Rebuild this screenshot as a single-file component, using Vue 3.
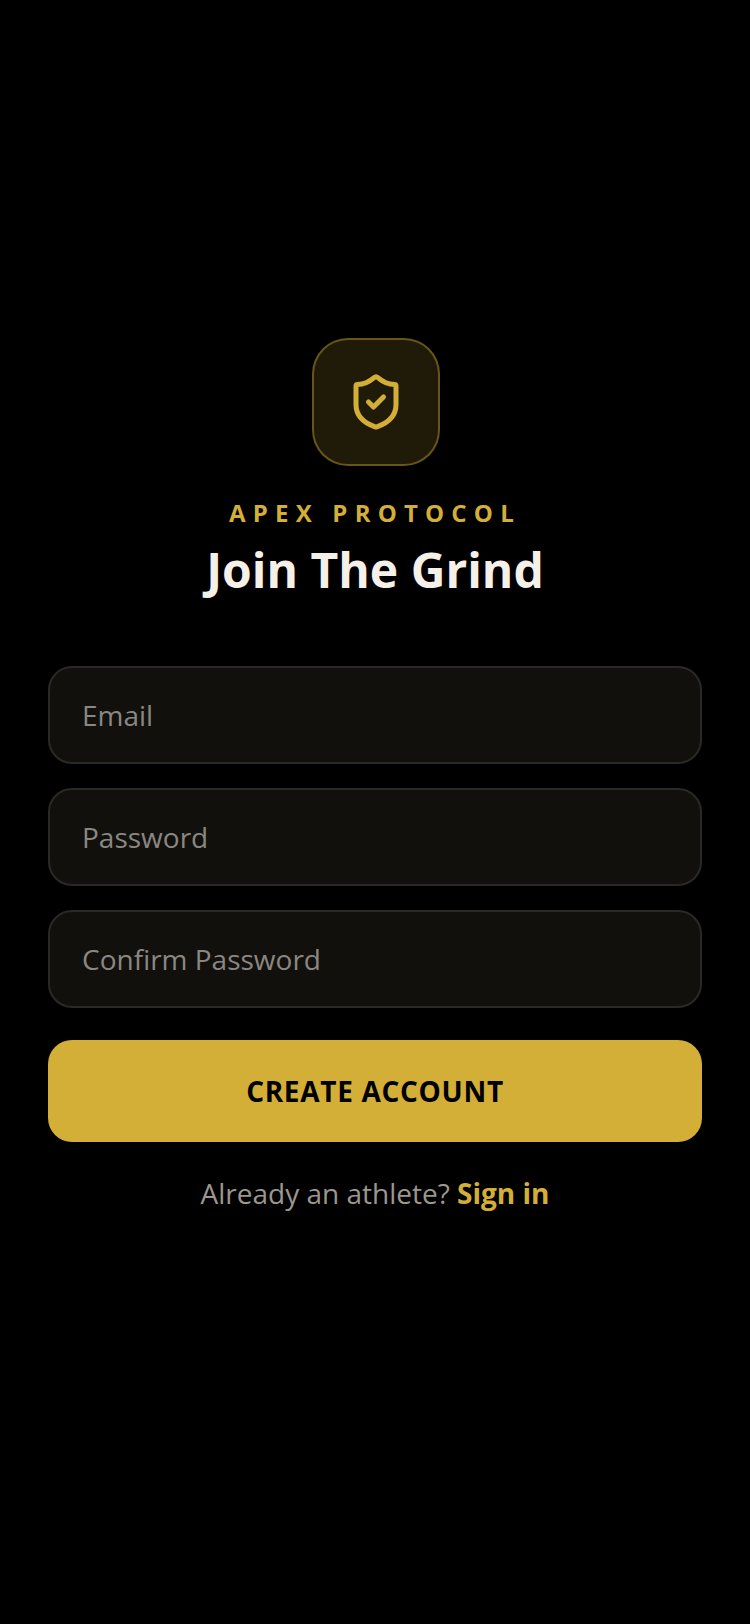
<template>
  <main class="page">
    <div class="logo">
      <svg width="60" height="60" viewBox="0 0 24 24" fill="none" stroke="#d4af37" stroke-width="2" stroke-linecap="round" stroke-linejoin="round">
        <path d="M20 13c0 5-3.5 7.5-7.66 8.95a1 1 0 0 1-.67-.01C7.5 20.5 4 18 4 13V5.6a.6.6 0 0 1 .6-.6c2.2 0 4.9-1.2 6.64-2.72a1.17 1.17 0 0 1 1.52 0C14.51 3.81 17.2 5 19.4 5a.6.6 0 0 1 .6.6z" />
        <path d="m9 12 2 2 4-4" />
      </svg>
    </div>
    <div class="brand">APEX PROTOCOL</div>
    <h1 class="title">Join The Grind</h1>

    <form class="form" @submit.prevent>
      <input class="field" type="email" placeholder="Email" />
      <input class="field" type="password" placeholder="Password" />
      <input class="field" type="password" placeholder="Confirm Password" />
      <button class="submit" type="submit">CREATE ACCOUNT</button>
    </form>

    <p class="switch">Already an athlete? <a class="link">Sign in</a></p>
  </main>
</template>

<script setup>
</script>

<style>
html,
body {
  margin: 0;
  background: #000;
}
</style>

<style scoped>
.page {
  box-sizing: border-box;
  width: 750px;
  height: 1624px;
  padding: 338px 48px 0;
  display: flex;
  flex-direction: column;
  align-items: center;
  background: #000;
  font-family: "Open Sans", sans-serif;
}

.logo {
  box-sizing: border-box;
  width: 128px;
  height: 128px;
  margin-left: 2px;
  display: flex;
  align-items: center;
  justify-content: center;
  border: 2px solid rgba(212, 175, 55, 0.4);
  border-radius: 36px;
  background: rgba(212, 175, 55, 0.15);
}

.brand {
  margin-top: 30px;
  font-size: 24px;
  line-height: 34px;
  font-weight: 700;
  letter-spacing: 7.2px;
  color: #d4af37;
}

.title {
  margin: 8px 0 0;
  font-size: 48px;
  line-height: 64px;
  font-weight: 700;
  color: #f5f1e8;
}

.form {
  width: 100%;
  margin-top: 64px;
  display: flex;
  flex-direction: column;
  gap: 24px;
}

.field {
  box-sizing: border-box;
  width: 100%;
  height: 98px;
  padding: 0 32px;
  border: 2px solid #2b2925;
  border-radius: 24px;
  outline: none;
  background: #11100c;
  font-family: inherit;
  font-size: 28px;
  color: #f5f1e8;
}

.field::placeholder {
  color: #8a8782;
  opacity: 1;
}

.submit {
  height: 102px;
  margin-top: 8px;
  border: none;
  border-radius: 24px;
  background: #d4af37;
  font-family: inherit;
  font-size: 28px;
  font-weight: 700;
  letter-spacing: 0.7px;
  color: #000;
}

.switch {
  margin: 31px 0 0;
  font-size: 28px;
  line-height: 40px;
  color: #9c978e;
}

.link {
  font-weight: 700;
  color: #d4af37;
}
</style>
